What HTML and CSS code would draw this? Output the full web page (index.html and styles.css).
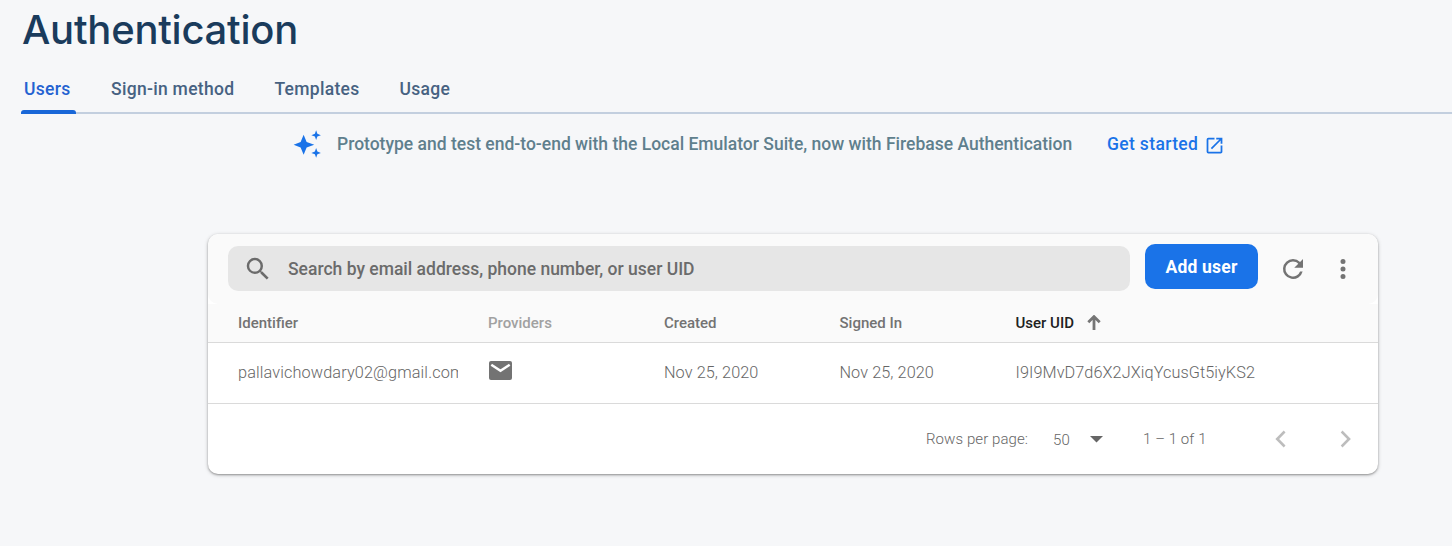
FILE: index.html
```html
<!DOCTYPE html>
<html lang="en">
<head>
<meta charset="utf-8">
<title>Authentication</title>
<link rel="stylesheet" href="styles.css">
</head>
<body>
<h1 class="title">Authentication</h1>
<nav class="tabs">
  <a class="tab tab-active">Users</a>
  <a class="tab">Sign-in method</a>
  <a class="tab">Templates</a>
  <a class="tab">Usage</a>
</nav>
<section class="promo">
  <svg class="spark" width="30" height="30" viewBox="0 0 24 24"><path d="M8.500 4.500l2.400 5.800L17 12.500l-6.100 2.200L8.500 20.500l-2.400-5.800L.5 12.500l5.600-2.200zM18.500 1l1 2.800 2.800 1.100L19.500 6l-1 2.800-1-2.800-2.800-1.100 2.800-1.100zM18.500 15.200l1 2.800 2.800 1.100-2.800 1.100-1 2.800-1-2.800-2.800-1.100 2.800-1.100z"/></svg>
  <span class="promo-text">Prototype and test end-to-end with the Local Emulator Suite, now with Firebase Authentication</span>
  <a class="promo-link"><span>Get started</span>
    <svg width="21" height="21" viewBox="0 0 24 24"><path d="M19 19H5V5h7V3H5a2 2 0 0 0-2 2v14a2 2 0 0 0 2 2h14c1.1 0 2-.9 2-2v-7h-2v7zM14 3v2h3.59l-9.83 9.83 1.41 1.41L19 6.41V10h2V3h-7z"/></svg>
  </a>
</section>
<main class="card">
  <div class="toolbar">
    <div class="search">
      <svg width="30" height="30" viewBox="0 0 24 24"><path d="M15.5 14h-.79l-.28-.27A6.47 6.47 0 0 0 16 9.5 6.5 6.5 0 1 0 9.5 16c1.61 0 3.09-.59 4.23-1.57l.27.28v.79l5 4.99L20.49 19l-4.99-5zm-6 0C7.01 14 5 11.99 5 9.5S7.01 5 9.5 5 14 7.01 14 9.5 11.99 14 9.5 14z"/></svg>
      <span>Search by email address, phone number, or user UID</span>
    </div>
    <button class="add">Add user</button>
    <svg class="refresh" width="30" height="30" viewBox="0 0 24 24"><path d="M17.65 6.35A7.96 7.96 0 0 0 12 4a8 8 0 1 0 7.73 10h-2.08A6 6 0 1 1 12 6c1.66 0 3.14.69 4.22 1.78L13 11h7V4l-2.35 2.35z"/></svg>
    <svg class="more" width="30" height="30" viewBox="0 0 24 24"><path d="M12 8a2 2 0 1 0 0-4 2 2 0 0 0 0 4zm0 2a2 2 0 1 0 0 4 2 2 0 0 0 0-4zm0 6a2 2 0 1 0 0 4 2 2 0 0 0 0-4z"/></svg>
  </div>
  <div class="row head">
    <span>Identifier</span>
    <span class="muted">Providers</span>
    <span>Created</span>
    <span>Signed In</span>
    <span class="sorted">User UID
      <svg width="14" height="15" viewBox="0 0 14 15"><path d="M7 1.5V15M1.3 7.2L7 1.6l5.700 5.600"/></svg>
    </span>
  </div>
  <div class="row data">
    <span class="email">pallavichowdary02@gmail.com</span>
    <span class="provider"><svg width="23" height="19" viewBox="0 0 23 19"><path class="envelope" d="M2 0h19a2 2 0 0 1 2 2v15a2 2 0 0 1-2 2H2a2 2 0 0 1-2-2V2a2 2 0 0 1 2-2z"/><path class="flap" d="M2.300 3.700l9.200 6 9.200-6"/></svg></span>
    <span class="created">Nov 25, 2020</span>
    <span class="signed">Nov 25, 2020</span>
    <span class="uid">I9I9MvD7d6X2JXiqYcusGt5iyKS2</span>
  </div>
  <div class="pager">
    <span class="label">Rows per page:</span>
    <span class="size">50</span>
    <svg class="caret" width="13" height="7" viewBox="0 0 13 7"><path d="M0 0h13L6.500 6.500z"/></svg>
    <span class="range">1 – 1 of 1</span>
    <svg class="prev" width="30" height="30" viewBox="0 0 24 24"><path d="M16.400 6.800L15 5.200 8.300 12 15 18.800l1.400-1.600L11.300 12z"/></svg>
    <svg class="next" width="30" height="30" viewBox="0 0 24 24"><path d="M8.600 6.800L10 5.200l6.700 6.800L10 18.800l-1.400-1.600 5.100-5.200z"/></svg>
  </div>
</main>
</body>
</html>
```
FILE: styles.css
```css
* { box-sizing: border-box; }
body {
  margin: 0;
  height: 546px;
  overflow: hidden;
  background: #f6f7f9;
  font-family: Roboto, "Liberation Sans", sans-serif;
  color: #737373;
}
svg { display: block; flex: none; fill: currentColor; }
span { white-space: nowrap; }
.title {
  margin: 0;
  padding-left: 22px;
  height: 64px;
  font: 450 40px/59px Inter, sans-serif;
  letter-spacing: -.25px;
  color: #1a3b5c;
}
.tabs {
  display: flex;
  height: 50px;
  margin-left: 21px;
  gap: 34px;
  border-bottom: 2px solid #c3cfdf;
}
.tab {
  height: 50px;
  padding: 0 3px;
  font-size: 17.5px;
  font-weight: 500;
  line-height: 50px;
  letter-spacing: .3px;
  color: #476282;
}
.tab-active { width: 55px; margin-right: -2px; color: #2462d1; position: relative; }
.tab-active::after {
  content: "";
  position: absolute;
  left: 0;
  bottom: 0;
  width: 55px;
  height: 4px;
  border-radius: 3px 3px 0 0;
  background: #1967d8;
}
.promo {
  display: flex;
  align-items: center;
  height: 60px;
  padding-left: 293px;
  font-size: 17.5px;
  font-weight: 500;
  color: #5f7f8d;
}
.spark { color: #1a73e8; }
.promo-text { width: 736px; margin: 0 34px 0 14px; }
.promo-link { display: flex; align-items: center; gap: 5px; color: #1a73e8; }
.promo-link span { width: 92px; letter-spacing: .35px; }
.promo-link svg { position: relative; top: 1px; }
.card {
  width: 1170px;
  height: 240px;
  margin: 60px 0 0 208px;
  border-radius: 10px;
  background: #fff;
  overflow: hidden;
  box-shadow: 0 1px 2px rgba(0,0,0,.3), 0 1px 4px rgba(0,0,0,.2);
}
.toolbar { display: flex; height: 70px; padding: 12px 0 0 20px; background: #fafafa; border-radius: 10px; }
.search {
  display: flex;
  align-items: center;
  width: 902px;
  height: 45px;
  padding-left: 15px;
  gap: 15px;
  border-radius: 10px;
  background: #e6e6e6;
  font-size: 17.5px;
  font-weight: 500;
  color: #6b6b6b;
}
.add {
  width: 113px;
  height: 45px;
  margin: -2px 20px 0 15px;
  padding: 0;
  border: 0;
  border-radius: 10px;
  background: #1a73e8;
  color: #fff;
  font: 700 17.5px Roboto, sans-serif;
  letter-spacing: .2px;
}
.refresh, .more { margin-top: 8px; }
.more { margin-left: 20px; }
.row {
  display: grid;
  grid-template-columns: 250px 176px 175.500px 176px 1fr;
  align-items: center;
  padding-left: 30px;
  border-bottom: 1px solid #dadada;
}
.head { height: 39px; background: #fafafa; font-size: 15px; font-weight: 500; }
.muted { color: #a1a1a1; }
.sorted { display: flex; align-items: center; gap: 13px; color: #212121; }
.sorted svg { fill: none; stroke: #757575; stroke-width: 2.800; margin-top: -2px; }
.data { height: 61px; padding-bottom: 2px; font-size: 16.250px; font-weight: 300; letter-spacing: .08px; color: #666; }
.email { width: 220px; overflow: hidden; line-height: 24px; padding-top: 1px; letter-spacing: .13px; }
.provider { padding-left: 1px; margin-top: -4px; color: #737373; }
.flap { fill: none; stroke: #fff; stroke-width: 2.500; }
.pager {
  display: flex;
  align-items: center;
  height: 70px;
  padding-left: 718px;
  font-size: 15px;
  font-weight: 300;
  letter-spacing: .08px;
  color: #666;
}
.label { width: 127px; }
.size { width: 37px; padding-top: 1px; }
.caret { margin-top: 1px; }
.range { width: 106px; margin-left: 40px; }
.prev { margin-left: 16px; color: #bdbdbd; }
.next { margin-left: 35px; color: #bdbdbd; }
```
